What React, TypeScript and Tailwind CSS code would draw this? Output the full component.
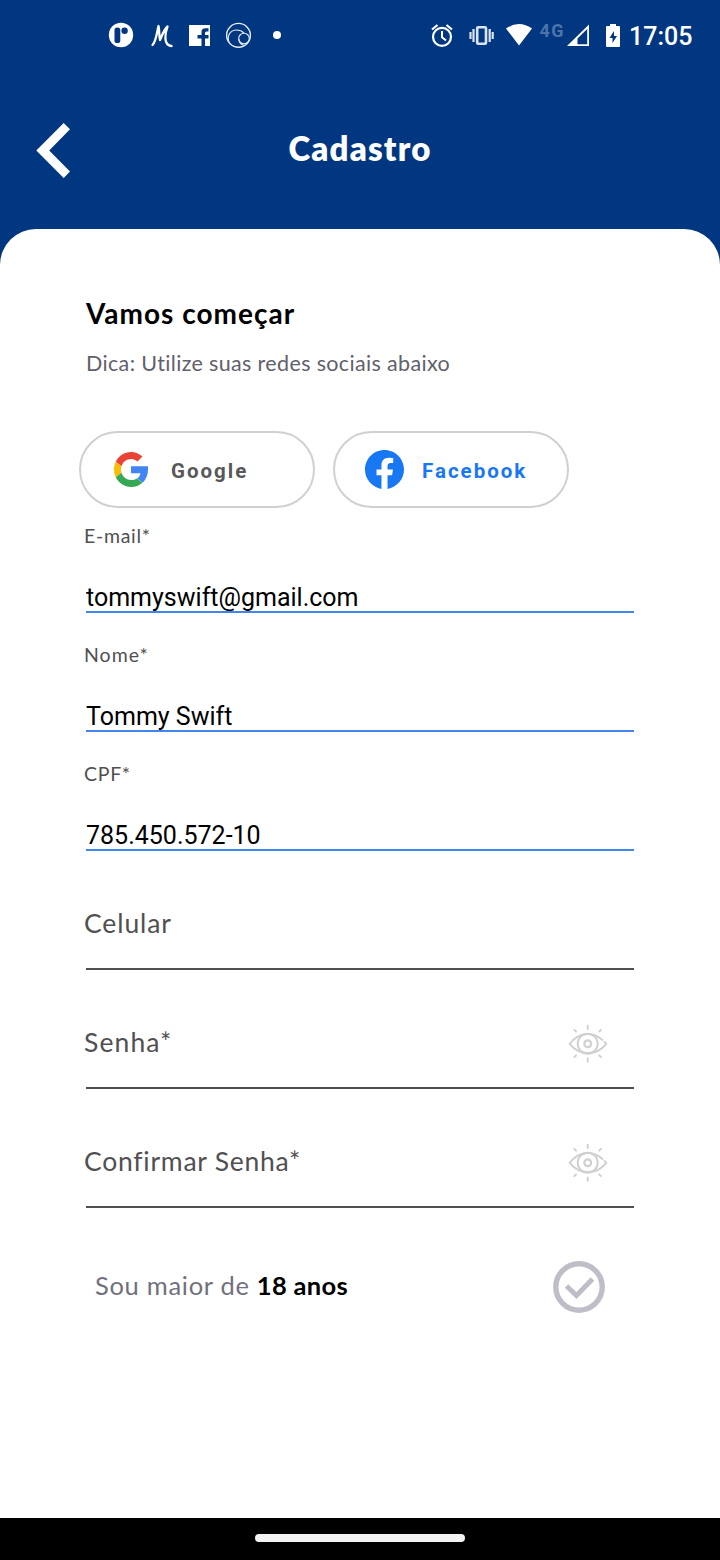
import React from "react";

const brand = "font-['Lato','Noto_Sans',sans-serif]";

function StatusBar() {
  return (
    <div className="flex h-[72px] items-center pl-[108px] pr-[28px] text-white">
      <svg width="180" height="28" viewBox="108 21 180 28" className="mb-[2px] shrink-0">
        <circle cx="121" cy="35" r="12.2" fill="#fff" />
        <rect x="114.500" y="27.500" width="5.800" height="15.500" rx="2.600" fill="#003780" />
        <circle cx="124.600" cy="30.700" r="3.200" fill="#003780" />
        <path d="M152.500 45C156 42 157 32 158.500 26C159.500 30 159 36 160 40C162 36 164 29 167.500 26.500C165 33 163 45 171.500 46" fill="none" stroke="#fff" strokeWidth="2.300" strokeLinecap="round" strokeLinejoin="round" />
        <path d="M189 25H210V46H205V38.500H208.500V35H205V33Q205 31.500 206.500 31.500H208.500V28.300H205.500Q201.500 28.300 201.500 32V35H197.500V38.500H201.500V46H189Z" fill="#fff" />
        <g fill="none" stroke="#e6edf5" strokeWidth="1.100">
          <circle cx="238.500" cy="35.300" r="11.900" strokeWidth="1.400" />
          <path d="M229 42C226.500 35 231 30 236.500 30C240.500 30 242.500 31.500 244 33" />
          <circle cx="244" cy="38.500" r="5.300" />
          <path d="M238.800 39C239 43 241.500 45.500 244.500 45.200" />
        </g>
        <circle cx="277" cy="35" r="4" fill="#fff" />
      </svg>
      <div className="ml-auto flex items-center">
        <svg width="198" height="28" viewBox="430 21 198 28" className="mb-[2px] shrink-0">
          <g fill="none" stroke="#fff">
            <circle cx="442" cy="36.800" r="9" strokeWidth="2.200" />
            <path d="M442 31V37.200L446 40.500" strokeWidth="2" />
            <path d="M432 29.500L437.500 25M452 29.500L446.500 25" strokeWidth="2.200" />
          </g>
          <g fill="none" stroke="#dbe5f1" strokeWidth="2.200">
            <rect x="477.200" y="27.200" width="8.800" height="16.500" rx="1" strokeWidth="2.600" />
            <path d="M473.500 29V42M470.500 32V39M489.700 29V42M492.700 32V39" />
          </g>
          <path d="M506 28.500Q519 19.500 532 28.500L519 45.500Z" fill="#fff" />
          <text x="539.500" y="37" fontSize="18" fontWeight="700" fill="#4d74a8" className="font-['Roboto',sans-serif]" textLength="24">4G</text>
          <path d="M567 46L589 24.500V46Z" fill="#fff" />
          <path d="M577.500 38.500L587.200 29V44.200H577.500Z" fill="#003780" />
          <path d="M610 24H616V26H619Q620 26 620 27V46Q620 47 619 47H607Q606 47 606 46V27Q606 26 607 26H610Z" fill="#fff" />
          <path d="M614 31V36H617L612.500 43V38H609.500Z" fill="#003780" />
        </svg>
        <span className="w-[64px] whitespace-nowrap pl-px pt-[2px] font-['Roboto',sans-serif] text-[25px] font-medium leading-7">17:05</span>
      </div>
    </div>
  );
}

function GoogleIcon() {
  return (
    <svg width="34" height="35" viewBox="0 0 48 48" preserveAspectRatio="none">
      <path fill="#EA4335" d="M24 9.500c3.540 0 6.710 1.220 9.210 3.600l6.850-6.850C35.900 2.380 30.470 0 24 0 14.620 0 6.510 5.380 2.560 13.220l7.980 6.190C12.430 13.720 17.740 9.500 24 9.500z" />
      <path fill="#4285F4" d="M48 19.700H24v9.500h13.400c-.6 2.900-2.300 5.400-4.800 7.100l7.700 6C45.100 37.900 48 31.800 48 24z" />
      <path fill="#FBBC05" d="M10.530 28.590c-.48-1.450-.76-2.990-.76-4.590s.27-3.140.76-4.590l-7.980-6.190C.92 16.460 0 20.120 0 24c0 3.880.92 7.540 2.560 10.780l7.970-6.190z" />
      <path fill="#34A853" d="M24 48c6.480 0 11.930-2.130 15.890-5.810l-7.730-6c-2.150 1.450-4.920 2.300-8.160 2.300-6.260 0-11.570-4.220-13.470-9.910l-7.980 6.190C6.510 42.620 14.620 48 24 48z" />
    </svg>
  );
}

function FacebookIcon() {
  return (
    <svg width="39" height="39" viewBox="0 0 24 24">
      <path fill="#1877F2" d="M24 12.073c0-6.627-5.373-12-12-12s-12 5.373-12 12c0 5.990 4.388 10.954 10.125 11.854v-8.385H7.078v-3.470h3.047V9.430c0-3.007 1.792-4.669 4.533-4.669 1.312 0 2.686.235 2.686.235v2.953H15.830c-1.491 0-1.956.925-1.956 1.874v2.250h3.328l-.532 3.470h-2.796v8.385C19.612 23.027 24 18.062 24 12.073z" />
    </svg>
  );
}

function EyeIcon() {
  return (
    <svg width="40" height="40" viewBox="0 0 40 40" fill="none" stroke="#d0d0d0" strokeWidth="1.900" strokeLinecap="round" className="mr-[26px] mb-[23px] shrink-0">
      <path d="M34.500 16C24.500 7.300 11.500 7.500 1.700 19.800C11.500 32 28.500 32.200 38.200 19.800L36.500 17.900" />
      <circle cx="19.700" cy="19.700" r="10" />
      <circle cx="19.700" cy="19.700" r="3.400" strokeWidth="2.200" />
      <path d="M19.700 1.800V5M19.700 34.500V37.700M6.300 5.800L8 7.500M33 5.800L31.300 7.500M6.300 33.200L8 31.500M33 33.200L31.300 31.500" />
    </svg>
  );
}

function FilledField({ label, value, first, labelClass }: { label: string; value: string; first?: boolean; labelClass: string }) {
  return (
    <div className={`flex flex-col justify-end border-b-2 border-[#4285ec] ${first ? "h-[105px]" : "h-[119px]"}`}>
      <label className={`-ml-[2px] mb-[36px] whitespace-nowrap ${brand} text-[19.500px] leading-6 text-[#505052] ${labelClass}`}>{label}</label>
      <span className="-mb-px whitespace-nowrap font-['Roboto',sans-serif] text-[25px] leading-7 text-black">{value}</span>
    </div>
  );
}

function EmptyField({ label, secret, labelClass }: { label: string; secret?: boolean; labelClass: string }) {
  return (
    <div className="flex h-[119px] items-end justify-between border-b-2 border-[#505052]">
      <label className={`-ml-[2px] mb-[29px] whitespace-nowrap ${brand} text-[26.500px] leading-8 text-[#505052] ${labelClass}`}>{label}</label>
      {secret && <EyeIcon />}
    </div>
  );
}

export default function App() {
  return (
    <div className="flex h-[1560px] w-[720px] flex-col overflow-hidden bg-[#003780]">
      <StatusBar />
      <header className="grid h-[157px] grid-cols-[120px_1fr_120px] items-start">
        <svg width="36" height="56" viewBox="0 0 36 56" className="ml-[35px] mt-[51px]">
          <path d="M28.700 0L35 6.300L14.200 27.500L35 48.500L28.700 55L1.300 27.500Z" fill="#fff" />
        </svg>
        <h1 className={`mt-[56px] text-center ${brand} text-[33px] font-extrabold leading-10 tracking-[1.200px] text-white`}>Cadastro</h1>
      </header>
      <main className="flex flex-1 flex-col rounded-t-[36px] bg-white px-[86px]">
        <h2 className={`mt-[66px] whitespace-nowrap ${brand} text-[28px] font-bold leading-9 tracking-[1px] text-black`}>Vamos começar</h2>
        <p className={`mt-[18px] whitespace-nowrap ${brand} text-[21.500px] leading-7 tracking-[0.350px] text-[#62606c]`}>Dica: Utilize suas redes sociais abaixo</p>
        <div className="-ml-[7px] mt-[54px] flex gap-[18px]">
          <button className="flex h-[77px] w-[236px] items-center rounded-full border-2 border-[#d0d0d0] pl-[33px] font-['Roboto',sans-serif] text-[20.500px] font-bold tracking-[2px] text-[#58585a]">
            <GoogleIcon />
            <span className="ml-[23px] mt-[3px]">Google</span>
          </button>
          <button className="flex h-[77px] w-[236px] items-center rounded-full border-2 border-[#d0d0d0] pl-[30px] font-['Roboto',sans-serif] text-[20.500px] font-bold tracking-[2px] text-[#1877f2]">
            <FacebookIcon />
            <span className="ml-[18px] mt-[3px]">Facebook</span>
          </button>
        </div>
        <FilledField first label="E-mail*" value="tommyswift@gmail.com" labelClass="tracking-[0.700px]" />
        <FilledField label="Nome*" value="Tommy Swift" labelClass="tracking-[1px]" />
        <FilledField label="CPF*" value="785.450.572-10" labelClass="tracking-[0.700px]" />
        <EmptyField label="Celular" labelClass="tracking-[0.900px]" />
        <EmptyField secret label="Senha*" labelClass="tracking-[1.100px]" />
        <EmptyField secret label="Confirmar Senha*" labelClass="tracking-[0.750px]" />
        <div className="mt-[53px] flex items-start justify-between pl-[9px] pr-[29px]">
          <p className={`mt-[8px] whitespace-nowrap ${brand} text-[25.500px] leading-8 tracking-[0.700px] text-[#71707d]`}>
            Sou maior de <strong className="font-bold tracking-[0.300px] text-black">18 anos</strong>
          </p>
          <svg width="52" height="52" viewBox="0 0 52 52" fill="none" stroke="#bfbdc7">
            <circle cx="26" cy="26" r="23.200" strokeWidth="5.400" />
            <path d="M13.500 25L23.500 34.500L39.500 18" strokeWidth="5" />
          </svg>
        </div>
      </main>
      <footer className="flex h-[42px] items-center justify-center bg-black">
        <div className="mb-[2px] h-2 w-[210px] rounded-full bg-[#f3f3f3]" />
      </footer>
    </div>
  );
}
